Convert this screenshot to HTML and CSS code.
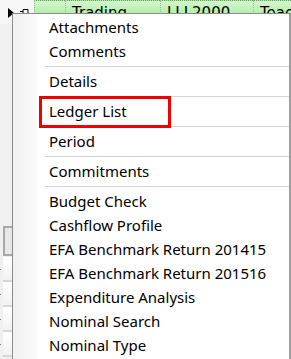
FILE: index.html
```html
<!DOCTYPE html>
<html lang="en">
<head>
    <meta charset="UTF-8">
    <meta name="viewport" content="width=device-width, initial-scale=1.0">
    <title>Ledger context menu</title>
    <link rel="stylesheet" href="styles.css">
</head>
<body>
    <div class="grid">
        <div class="grid-row">
            <div class="row-header">
                <svg class="row-arrow" width="6" height="10" viewBox="0 0 6 10"><polygon points="0,0 6,5 0,10" fill="#000"/></svg>
                <svg class="row-pin" width="9" height="5" viewBox="0 0 9 5"><path d="M0 2.5H3M3 0.5H8V4.5H3Z" fill="none" stroke="#000" stroke-width="1"/></svg>
            </div>
            <div class="cell cell-a"></div>
            <div class="cell cell-b">Trading</div>
            <div class="cell cell-c">LLL2000</div>
            <div class="cell cell-d">Teac</div>
        </div>
        <div class="side">
            <div class="side-btn selected"></div>
            <div class="side-btn"><span class="dot"></span></div>
            <div class="side-btn"><span class="dot"></span></div>
            <div class="side-btn"><span class="dot"></span></div>
            <div class="side-btn"><span class="dot"></span></div>
        </div>
    </div>

    <div class="menu">
        <div class="item">Attachments</div>
        <div class="item">Comments</div>
        <div class="sep"></div>
        <div class="item">Details</div>
        <div class="sep"></div>
        <div class="item">Ledger List</div>
        <div class="sep"></div>
        <div class="item">Period</div>
        <div class="sep"></div>
        <div class="item">Commitments</div>
        <div class="sep"></div>
        <div class="item">Budget Check</div>
        <div class="item">Cashflow Profile</div>
        <div class="item">EFA Benchmark Return 201415</div>
        <div class="item">EFA Benchmark Return 201516</div>
        <div class="item">Expenditure Analysis</div>
        <div class="item">Nominal Search</div>
        <div class="item">Nominal Type</div>
    </div>

    <div class="highlight"></div>
</body>
</html>
```

FILE: styles.css
```css
body {
    margin: 0;
    width: 291px;
    height: 359px;
    overflow: hidden;
    position: relative;
    background-color: #f0f0f0;
    font-family: "Noto Sans", "Open Sans", sans-serif;
}

.grid {
    display: flex;
    flex-direction: column;
}

.grid-row {
    display: flex;
    height: 24px;
}

.row-header {
    width: 34px;
    background-color: #f7f7f7;
    position: relative;
}

.row-arrow {
    position: absolute;
    left: 8px;
    top: 8px;
}

.row-pin {
    position: absolute;
    left: 20px;
    top: 9px;
}

.cell {
    height: 13px;
    background: linear-gradient(#d4f7cc, #b4ecaa);
    border-top: 1px dotted #6a9a64;
    border-left: 1px dotted #9ab89a;
    font-family: "DejaVu Sans", sans-serif;
    font-size: 15px;
    line-height: 24px;
    color: #000;
    padding: 0 0 0 6px;
    white-space: nowrap;
    overflow: hidden;
}

.cell-a { width: 24px; }
.cell-b { width: 88px; }
.cell-c { width: 86px; }
.cell-d { flex: 1; }

.side {
    display: flex;
    flex-direction: column;
    padding: 202px 0 0 3px;
}

.side-btn {
    width: 20px;
    height: 25px;
    box-sizing: border-box;
    background: linear-gradient(#ffffff, #f2f2f2);
    border-bottom: 2px solid #d6d6d6;
    position: relative;
}

.side-btn.selected {
    height: 30px;
    border: 2px solid #a8a8a8;
    background: #e8e8e8;
    margin-bottom: 1px;
}

.dot {
    position: absolute;
    left: -3px;
    top: 12px;
    width: 1px;
    height: 1px;
    background-color: #7a7a7a;
}

.menu {
    position: absolute;
    left: 12px;
    top: 13px;
    width: 279px;
    height: 346px;
    box-sizing: border-box;
    border: 1px solid #8c8c8c;
    border-bottom: none;
    border-right-width: 2px;
    border-right-color: #a0a0a0;
    padding-top: 1px;
    background: linear-gradient(90deg, #f0f0f0 0px, #fbfbfb 24px, #ffffff 25px);
}

.item {
    height: 24px;
    line-height: 24px;
    padding-left: 36px;
    font-size: 15px;
    color: #000;
    white-space: nowrap;
}

.sep {
    height: 6px;
    box-sizing: border-box;
    padding-top: 3px;
    margin-left: 32px;
}

.sep::before {
    content: "";
    display: block;
    height: 1px;
    background-color: #d4d4d4;
}

.highlight {
    position: absolute;
    left: 39px;
    top: 96px;
    width: 132px;
    height: 32px;
    box-sizing: border-box;
    border: 3px solid #f00000;
}
```
